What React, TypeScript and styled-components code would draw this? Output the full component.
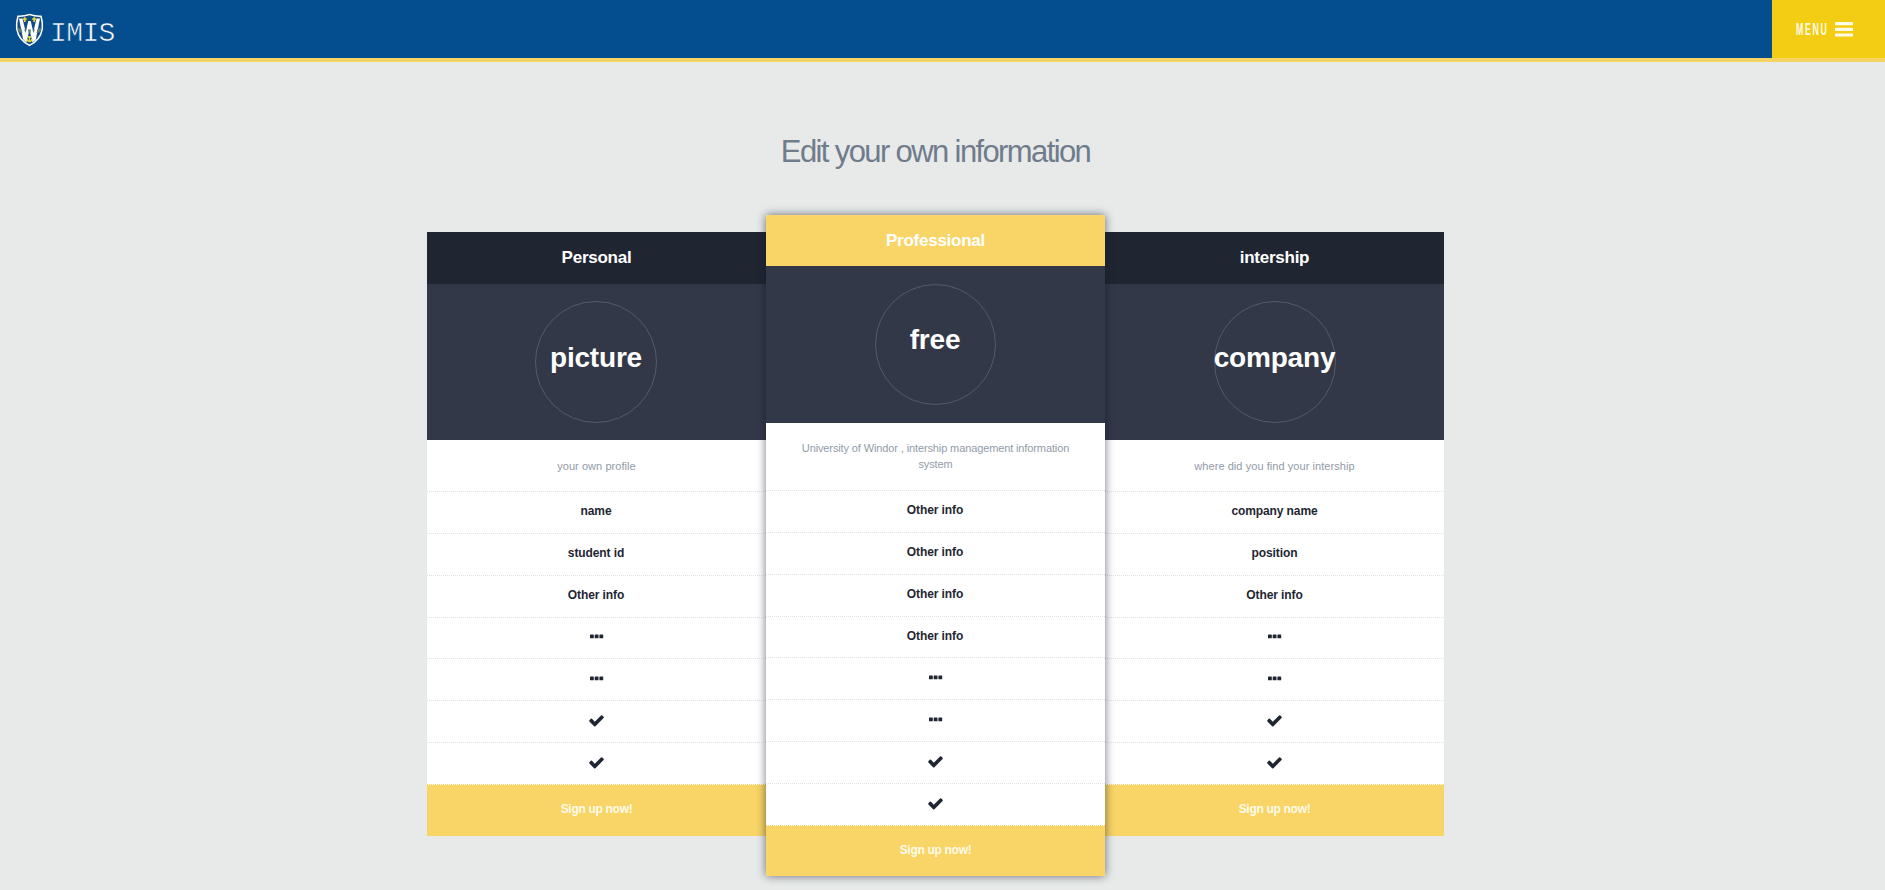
import React from "react";
import styled, { createGlobalStyle } from "styled-components";

const GlobalStyle = createGlobalStyle`
  * { box-sizing: border-box; }
  body {
    margin: 0;
    background: #e7eae9;
    font-family: "Liberation Sans", Arial, sans-serif;
  }
`;

const Page = styled.div`
  height: 100vh;
  overflow: hidden;
`;

const TopBar = styled.header`
  display: flex;
  justify-content: space-between;
  height: 62px;
  background: #044d8f;
  border-bottom: 4px solid #f5d463;
`;

const Brand = styled.a`
  display: flex;
  align-items: flex-start;
  padding: 13px 0 0 15px;
  color: #fff;
`;

const Crest = styled.svg`
  display: block;
  width: 29px;
  height: 34px;
`;

const BrandName = styled.span`
  margin: 2px 0 0 6px;
  font: 28px/38px "Liberation Mono", monospace;
  letter-spacing: -0.6px;
  color: #fff;
  -webkit-text-stroke: 0.6px #044d8f;
`;

const MenuButton = styled.button`
  display: flex;
  align-items: center;
  width: 113px;
  height: 58px;
  padding: 1px 0 0 24px;
  border: 0;
  background: #f2cd13;
  color: #fffbe8;
`;

const MenuLabel = styled.span`
  width: 32px;
  font: 700 16px/20px "Liberation Sans", sans-serif;
  letter-spacing: 3px;
  white-space: nowrap;
  transform: scaleX(0.55);
  transform-origin: 0 50%;
`;

const MenuIcon = styled.svg`
  display: block;
  flex: none;
  width: 18px;
  height: 15px;
  margin-left: 7px;
`;

const Main = styled.main`
  padding: 71px 14px 0 0;
`;

const Title = styled.h1`
  margin: 0 0 44px;
  font-size: 31px;
  font-weight: 400;
  line-height: 38px;
  letter-spacing: -1.62px;
  text-align: center;
  color: #707c8c;
`;

const Plans = styled.div`
  display: flex;
  align-items: flex-start;
  width: 1017px;
  margin: 0 auto;
`;

const Plan = styled.section<{ $featured?: boolean }>`
  position: relative;
  z-index: ${(p) => (p.$featured ? 1 : 0)};
  flex: 1;
  margin-top: ${(p) => (p.$featured ? 0 : 17)}px;
  background: #fff;
  text-align: center;
  border-radius: ${(p) => (p.$featured ? 2 : 0)}px;
  overflow: hidden;
  box-shadow: ${(p) => (p.$featured ? "0 0 10px rgba(20, 22, 40, 0.6)" : "none")};

  &:last-child li,
  &:last-child h2 + div { padding-right: 0; }
`;

const PlanName = styled.h2<{ $featured?: boolean }>`
  height: ${(p) => (p.$featured ? 51 : 52)}px;
  margin: 0;
  font-size: 17px;
  line-height: 51px;
  letter-spacing: -0.25px;
  background: ${(p) => (p.$featured ? "#f8d566" : "#1f2632")};
  color: #fff;
`;

const PlanHero = styled.div<{ $featured?: boolean }>`
  display: flex;
  justify-content: center;
  height: ${(p) => (p.$featured ? 157 : 156)}px;
  padding: ${(p) => (p.$featured ? 18 : 17)}px 1px 0 0;
  background: #323848;
`;

const Circle = styled.div<{ $featured?: boolean }>`
  display: flex;
  justify-content: center;
  width: ${(p) => (p.$featured ? 121 : 122)}px;
  height: ${(p) => (p.$featured ? 121 : 122)}px;
  border: 1px solid #555a6b;
  border-radius: 50%;
  font-size: 28px;
  font-weight: 700;
  line-height: ${(p) => (p.$featured ? 109 : 111)}px;
  letter-spacing: -0.2px;
  color: #fff;
`;

const Description = styled.p<{ $tall?: boolean }>`
  height: ${(p) => (p.$tall ? 68 : 52)}px;
  margin: 0;
  padding: ${(p) => (p.$tall ? 17 : 18)}px 30px 0;
  border-bottom: 1px dotted #dfe2e5;
  font-size: 11px;
  line-height: 16px;
  letter-spacing: ${(p) => (p.$tall ? -0.12 : 0.06)}px;
  color: #929ba9;
`;

const Features = styled.ul`
  margin: 0;
  padding: 0;
  list-style: none;
`;

const Feature = styled.li`
  display: flex;
  justify-content: center;
  align-items: center;
  height: 41.85px;
  padding: 0 1px 2px 0;
  border-bottom: 1px dotted #dfe2e5;
  font-size: 12px;
  font-weight: 700;
  letter-spacing: -0.1px;
  color: #1f2632;

  &:last-child { border-bottom-color: #f8d566; }
`;

const Glyph = styled.svg`
  display: block;
  width: 17px;
  height: 17px;
  fill: currentColor;
`;

const SignUp = styled.button<{ $featured?: boolean }>`
  display: block;
  width: 100%;
  height: ${(p) => (p.$featured ? 50 : 51)}px;
  padding: 0 0 2px;
  border: 0;
  background: #f8d566;
  font: 700 12px/16px "Liberation Sans", sans-serif;
  letter-spacing: -0.3px;
  color: #fffbea;
`;

const Check = () => (
  <Glyph viewBox="0 0 1792 1792">
    <path d="M1671 566q0 40-28 68l-724 724-136 136q-28 28-68 28t-68-28l-136-136-362-362q-28-28-28-68t28-68l136-136q28-28 68-28t68 28l294 295 656-657q28-28 68-28t68 28l136 136q28 28 28 68z" />
  </Glyph>
);

const Dots = () => (
  <Glyph viewBox="0 0 17 17">
    <rect x="2" y="6.5" width="3.8" height="3.8" rx="0.6" />
    <rect x="6.7" y="6.5" width="3.8" height="3.8" rx="0.6" />
    <rect x="11.4" y="6.5" width="3.8" height="3.8" rx="0.6" />
  </Glyph>
);

interface PlanData {
  name: string;
  hero: string;
  description: string;
  features: string[];
  featured?: boolean;
}

const plans: PlanData[] = [
  {
    name: "Personal",
    hero: "picture",
    description: "your own profile",
    features: ["name", "student id", "Other info", "dots", "dots", "check", "check"],
  },
  {
    name: "Professional",
    hero: "free",
    description: "University of Windor , intership management information system",
    features: ["Other info", "Other info", "Other info", "Other info", "dots", "dots", "check", "check"],
    featured: true,
  },
  {
    name: "intership",
    hero: "company",
    description: "where did you find your intership",
    features: ["company name", "position", "Other info", "dots", "dots", "check", "check"],
  },
];

const renderFeature = (f: string) => (f === "check" ? <Check /> : f === "dots" ? <Dots /> : f);

export default function App() {
  return (
    <Page>
      <GlobalStyle />
      <TopBar>
        <Brand>
          <Crest viewBox="0 0 29 34">
            <path d="M2.5 2.5Q8 3 14.5 .8Q21 3 26.5 2.5Q28.5 8 28 16Q26 28 14.5 33.2Q3 28 1 16Q.5 8 2.5 2.5Z" fill="#fff" />
            <path d="M3.6 4Q9 4.2 14.5 2.3Q20 4.2 25.4 4Q27 9 26.5 16Q24.5 26.5 14.5 31.5Q4.5 26.5 2.5 16Q2 9 3.6 4Z" fill="#124a86" />
            <path d="M4 5.5H7.5L10.7 19L13.3 8H15.7L18.3 19L21.5 5.5H25L20.8 26.5L17.5 29.5L14.5 16.5L11.5 29.5L8.2 26.5Z" fill="#fff" />
            <path d="M2.8 14.5L6.5 16.2L7.5 20L3.5 19ZM26.2 14.5L22.5 16.2L21.5 20L25.5 19ZM9 16.5H11.5L10.7 20ZM20 16.5H17.5L18.3 20ZM13 16.5H16L15.5 20H13.5Z" fill="#5d7f76" />
            <path d="M9.8 4.2V9M7.9 6.2H11.7M19.2 4.2V9M17.3 6.2H21.1" stroke="#e6d63a" strokeWidth="1.7" />
            <path d="M14.5 23V28.5M12 26Q12.5 28.5 14.5 28.5Q16.5 28.5 17 26M13 24H16" stroke="#e6d63a" strokeWidth="1.4" fill="none" />
          </Crest>
          <BrandName>IMIS</BrandName>
        </Brand>
        <MenuButton>
          <MenuLabel>MENU</MenuLabel>
          <MenuIcon viewBox="0 0 18 15" fill="currentColor">
            <rect width="18" height="3.2" rx=".5" />
            <rect y="5.7" width="18" height="3.2" rx=".5" />
            <rect y="11.4" width="18" height="3.2" rx=".5" />
          </MenuIcon>
        </MenuButton>
      </TopBar>
      <Main>
        <Title>Edit your own information</Title>
        <Plans>
          {plans.map((plan) => (
            <Plan key={plan.name} $featured={plan.featured}>
              <PlanName $featured={plan.featured}>{plan.name}</PlanName>
              <PlanHero $featured={plan.featured}>
                <Circle $featured={plan.featured}>{plan.hero}</Circle>
              </PlanHero>
              <Description $tall={plan.featured}>{plan.description}</Description>
              <Features>
                {plan.features.map((f, i) => (
                  <Feature key={i}>{renderFeature(f)}</Feature>
                ))}
              </Features>
              <SignUp $featured={plan.featured}>Sign up now!</SignUp>
            </Plan>
          ))}
        </Plans>
      </Main>
    </Page>
  );
}
